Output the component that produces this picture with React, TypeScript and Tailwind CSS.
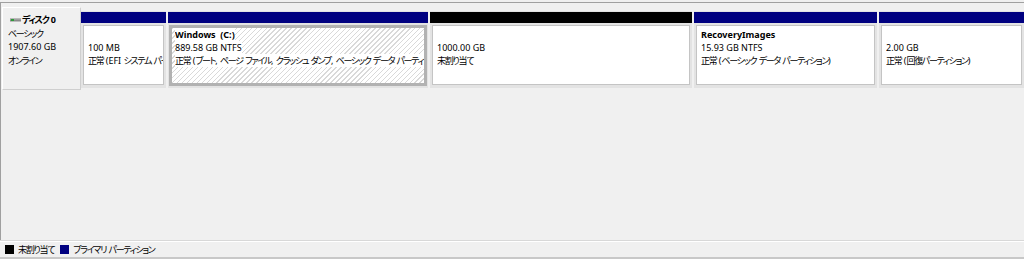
import React from 'react';

type Part = {
  width?: string;
  head: string;
  name?: string;
  size: string;
  status: string;
  selected?: boolean;
};

const parts: Part[] = [
  { width: 'w-[85px]', head: 'bg-[#000080]', size: '100 MB', status: '正常 (EFI システム パーティション)' },
  {
    width: 'w-[260px]',
    head: 'bg-[#000080]',
    name: 'Windows  (C:)',
    size: '889.58 GB NTFS',
    status: '正常 (ブート, ページ ファイル, クラッシュ ダンプ, ベーシック データ パーティション)',
    selected: true,
  },
  { width: 'w-[262px]', head: 'bg-black', size: '1000.00 GB', status: '未割り当て' },
  {
    width: 'w-[183px]',
    head: 'bg-[#000080]',
    name: 'RecoveryImages',
    size: '15.93 GB NTFS',
    status: '正常 (ベーシック データ パーティション)',
  },
  { head: 'bg-[#000080]', size: '2.00 GB', status: '正常 (回復パーティション)' },
];

// kana/kanji are narrower in the original UI font, tighten them
const Jp: React.FC<{ text: string }> = ({ text }) => (
  <>
    {text.split(/([\u3000-\u30ff\u4e00-\u9fff]+)/).map((s, i) =>
      i % 2 ? (
        <span key={i} className="tracking-[-1.3px]">{s}</span>
      ) : (
        s
      )
    )}
  </>
);

const DiskIcon = () => (
  <svg width="11" height="4" viewBox="0 0 11 4" className="shrink-0">
    <rect x="0" y="0.5" width="11" height="3" fill="#8a8a8a" />
    <rect x="0" y="0.5" width="11" height="1" fill="#b5b5b5" />
    <rect x="1" y="1" width="3" height="2" fill="#2f9a3a" />
  </svg>
);

const Line: React.FC<{ text?: string; bold?: boolean; opaque?: boolean }> = ({ text, bold, opaque }) => (
  <div className="h-[13px] leading-[13px] whitespace-pre overflow-hidden">
    {text ? (
      <span className={`${bold ? 'font-bold' : ''} ${opaque ? 'bg-white' : ''}`}>
        <Jp text={text} />
      </span>
    ) : (
      '\u00a0'
    )}
  </div>
);

const Partition: React.FC<{ p: Part }> = ({ p }) => (
  <div className={`${p.width ?? 'flex-1 min-w-0'} flex flex-col bg-[#e3e3e3] pb-[2px]`}>
    <div className={`mt-[1px] h-[11px] ${p.head}`} />
    {p.selected ? (
      <div className="mt-[2px] mx-[1px] h-[61px] border-[3px] border-[#b2b2b2] pl-[3px] overflow-hidden bg-[repeating-linear-gradient(135deg,#d9d9d9_0px,#d9d9d9_1px,#ffffff_1px,#ffffff_3.5px)]">
        <Line text={p.name} bold opaque />
        <Line text={p.size} opaque />
        <Line text={p.status} opaque />
      </div>
    ) : (
      <div className="mt-[2px] mx-[2px] h-[60px] border border-[#c4c4c4] bg-white pt-[2px] pl-[4px] overflow-hidden">
        <Line text={p.name} bold />
        <Line text={p.size} />
        <Line text={p.status} />
      </div>
    )}
  </div>
);

export default function App() {
  return (
    <div className="w-[1024px] h-[259px] bg-[#f0f0f0] overflow-hidden flex flex-col pt-[2px] text-[9px] text-black font-['Noto_Sans','Noto_Sans_CJK_JP',sans-serif] [font-feature-settings:'palt']">
      <div className="h-[238px] border-t border-l border-[#a0a0a0] flex items-start pt-[4px]">
        <div className="ml-[1px] w-[79px] h-[83px] border-t border-l border-white border-r border-b border-r-[#cfcfcf] border-b-[#cfcfcf] pt-[5px] pl-[5px] leading-[13.5px]">
          <div className="flex items-center gap-[1px] pl-[2px] h-[13.5px]">
            <DiskIcon />
            <span className="font-bold">
              <Jp text="ディスク 0" />
            </span>
          </div>
          <div>
            <Jp text="ベーシック" />
          </div>
          <div>1907.60 GB</div>
          <div>
            <Jp text="オンライン" />
          </div>
        </div>
        <div className="flex-1 min-w-0 flex gap-[2px] mt-[4px]">
          {parts.map((p, i) => (
            <Partition key={i} p={p} />
          ))}
        </div>
      </div>
      <div className="h-px bg-[#d8d8d8]" />
      <div className="h-px bg-white" />
      <div className="h-[15px] flex items-center pl-[5px] whitespace-nowrap">
        <div className="w-[9px] h-[9px] bg-black" />
        <span className="ml-[4px]">
          <Jp text="未割り当て" />
        </span>
        <div className="ml-[6px] w-[9px] h-[9px] bg-[#000080]" />
        <span className="ml-[4px]">
          <Jp text="プライマリ パーティション" />
        </span>
      </div>
      <div className="h-[2px] bg-[#c8c8c8]" />
    </div>
  );
}
